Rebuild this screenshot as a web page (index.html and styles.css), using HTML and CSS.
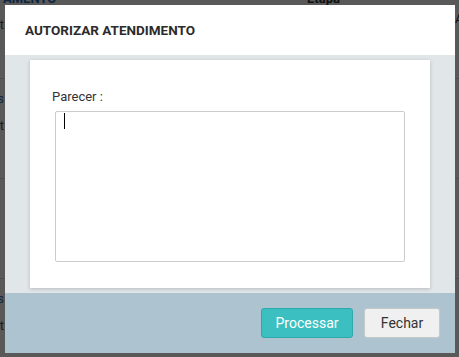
FILE: index.html
```html
<!DOCTYPE html>
<html lang="pt-BR">
<head>
<meta charset="utf-8">
<title>Autorizar Atendimento</title>
<link rel="stylesheet" href="styles.css">
</head>
<body>
<div class="page">
  <div class="thead">
    <div class="th-first">AMENTO</div>
    <div class="th-etapa">Etapa</div>
  </div>
  <div class="row r0">
    <div class="lc"><span class="muted">t</span></div>
    <div class="rc">A</div>
  </div>
  <div class="row r">
    <div class="lc"><span class="link">s</span><span class="muted">t</span></div>
  </div>
  <div class="row r">
    <div class="lc"></div>
  </div>
  <div class="row r last">
    <div class="lc"><span class="link">s</span><span class="muted">t</span></div>
  </div>
</div>

<div class="backdrop"></div>

<div class="modal">
  <div class="modal-header">
    <h4 class="modal-title">AUTORIZAR ATENDIMENTO</h4>
  </div>
  <div class="modal-body">
    <div class="card">
      <label class="label">Parecer :</label>
      <div class="field"><div class="caret"></div></div>
    </div>
  </div>
  <div class="modal-footer">
    <button class="btn btn-primary">Processar</button>
    <button class="btn btn-default">Fechar</button>
  </div>
</div>
</body>
</html>
```
FILE: styles.css
```css
* { box-sizing: border-box; }
html, body { margin: 0; padding: 0; }
body {
  width: 459px;
  height: 357px;
  overflow: hidden;
  position: relative;
  background: #fff;
  color: #333;
  font-family: Roboto, "Liberation Sans", Arial, sans-serif;
}

/* underlying page */
.page { margin-top: -10px; font-size: 13px; }
.thead {
  display: flex;
  height: 18px;
  line-height: 18px;
  font-weight: bold;
  padding-left: 3px;
}
.th-first { width: 304px; color: #2a6ebb; }
.th-etapa { color: #333; }
.row {
  display: flex;
  align-items: flex-start;
  border-bottom: 1px solid #ddd;
}
.r0 { height: 71px; }
.r { height: 100px; }
.r.last { height: 78px; border-bottom: 0; }
.lc {
  width: 4px;
  display: flex;
  flex-direction: column;
  align-items: flex-end;
  line-height: 27px;
  white-space: nowrap;
  padding-top: 6px;
}
.r0 .lc { padding-top: 3px; }
.rc {
  margin-left: auto;
  width: 4px;
  padding-top: 3px;
  line-height: 15px;
  white-space: nowrap;
}
.link { color: #2a6ebb; }
.muted { color: #555; }

.backdrop {
  position: fixed;
  inset: 0;
  background: rgba(0, 0, 0, 0.65);
}

/* modal */
.modal {
  position: fixed;
  left: 5px;
  top: 5px;
  width: 450px;
  height: 348px;
  display: flex;
  flex-direction: column;
  background: #fff;
}
.modal-header {
  flex: none;
  height: 50px;
  display: flex;
  align-items: center;
  padding-left: 20px;
}
.modal-title {
  margin: 0;
  font-size: 13.5px;
  font-weight: bold;
  color: #2b2b2b;
}
.modal-body {
  flex: 1;
  background: #e1e6e9;
  padding: 5px 25px;
}
.card {
  height: 228px;
  background: #fff;
  box-shadow: 0 1px 4px rgba(0, 0, 0, 0.2);
  padding: 28px 22px 0;
}
.label {
  display: block;
  font-size: 13px;
  line-height: 18px;
  margin-bottom: 5px;
  color: #333;
}
.field {
  height: 151px;
  margin: 0 3px;
  border: 1px solid #ccc;
  border-radius: 2px;
  background: #fff;
}
.caret {
  width: 1px;
  height: 16px;
  background: #000;
  margin: 1px 0 0 8px;
}
.modal-footer {
  flex: none;
  height: 60px;
  background: #adc4d0;
  display: flex;
  justify-content: flex-end;
  align-items: center;
  gap: 11px;
  padding-right: 15px;
}
.btn {
  height: 30px;
  padding: 0;
  font-family: inherit;
  font-size: 14px;
  border: 1px solid;
  border-radius: 3px;
}
.btn-primary {
  width: 92px;
  background: #3bbfc0;
  border-color: #2ca9aa;
  color: #fff;
}
.btn-default {
  width: 76px;
  background: #f0f0f0;
  border-color: #c4c9cc;
  color: #333;
}
```
